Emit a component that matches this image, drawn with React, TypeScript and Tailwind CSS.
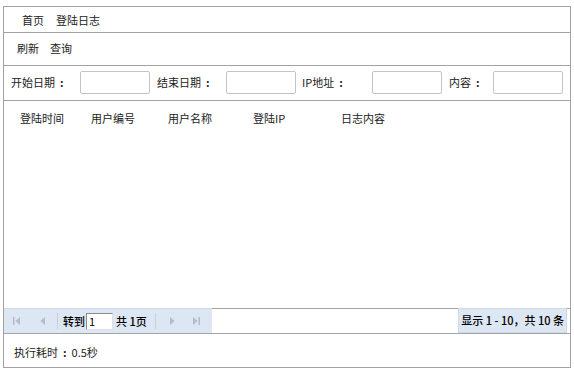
import React from 'react';

const cols = [
  { label: '登陆时间', w: 'w-[71px]' },
  { label: '用户编号', w: 'w-[77px]' },
  { label: '用户名称', w: 'w-[85px]' },
  { label: '登陆IP', w: 'w-[88px]' },
  { label: '日志内容', w: 'w-[80px]' },
];

// Disabled pager arrow icons
const PagerIcon = ({ kind }: { kind: 'first' | 'prev' | 'next' | 'last' }) => (
  <svg width="12" height="12" viewBox="0 0 12 12" className="text-[#b4bccb]">
    {kind === 'first' && (
      <>
        <rect x="2" y="2" width="1.5" height="8" fill="currentColor" />
        <path d="M9 2 L4.5 6 L9 10 Z" fill="currentColor" />
      </>
    )}
    {kind === 'prev' && <path d="M8 2 L3.5 6 L8 10 Z" fill="currentColor" />}
    {kind === 'next' && <path d="M4 2 L8.5 6 L4 10 Z" fill="currentColor" />}
    {kind === 'last' && (
      <>
        <path d="M3 2 L7.5 6 L3 10 Z" fill="currentColor" />
        <rect x="8.5" y="2" width="1.5" height="8" fill="currentColor" />
      </>
    )}
  </svg>
);

const Colon = () => <span className="inline-block px-[5px] font-bold">:</span>;

const FilterLabel = ({ text, className }: { text: string; className: string }) => (
  <span className={className}>
    {text}
    <Colon />
  </span>
);

const FilterInput = () => (
  <input
    type="text"
    className="w-[70px] h-[23px] border border-[#c4c4c4] rounded-[2px] bg-white outline-none px-1 text-[11px]"
  />
);

const App = () => {
  return (
    <div className="w-[574px] h-[371px] bg-white pt-[6px] pl-[3px] font-['Noto_Sans_CJK_SC',sans-serif] text-[11px] text-[#222]">
      <div className="w-[568px] h-[362px] border border-[#a3a3a3] flex flex-col">
        {/* Breadcrumb */}
        <div className="h-[26px] shrink-0 border-b border-[#a3a3a3] flex items-center pl-[18px] gap-[12px] pt-[1px]">
          <span>首页</span>
          <span>登陆日志</span>
        </div>

        {/* Toolbar */}
        <div className="h-[33px] shrink-0 border-b border-[#a3a3a3] flex items-center pl-[13px] gap-[11px] pb-[1px]">
          <span>刷新</span>
          <span>查询</span>
        </div>

        {/* Filters */}
        <div className="h-[35px] shrink-0 border-b border-[#a3a3a3] flex items-center pl-[7px] pb-[2px]">
          <FilterLabel text="开始日期" className="w-[69px]" />
          <FilterInput />
          <FilterLabel text="结束日期" className="w-[69px] ml-[7px]" />
          <FilterInput />
          <FilterLabel text="IP地址" className="w-[70px] ml-[6px]" />
          <FilterInput />
          <FilterLabel text="内容" className="w-[44px] ml-[7px]" />
          <FilterInput />
        </div>

        {/* Grid */}
        <div className="flex-1">
          <div className="flex pl-[16px] pt-[9px]">
            {cols.map((c) => (
              <span key={c.label} className={c.w}>
                {c.label}
              </span>
            ))}
          </div>
        </div>

        {/* Pager */}
        <div className="h-[26px] shrink-0 flex border-b border-[#a3a3a3]">
          <div className="w-[208px] bg-[#dde6f3] border-t border-[#cdd8e8] flex items-center pl-[7px]">
            <PagerIcon kind="first" />
            <span className="ml-[14px]">
              <PagerIcon kind="prev" />
            </span>
            <span className="ml-[8px] w-px h-[16px] bg-[#c5d0e0]" />
            <span className="ml-[5px] font-medium text-black">转到</span>
            <input
              type="text"
              defaultValue="1"
              className="ml-[1px] w-[27px] h-[17px] border border-[#8c8c8c] border-r-[#e0e0e0] border-b-[#e0e0e0] bg-white outline-none px-[2px] text-[11px] leading-none text-black"
            />
            <span className="ml-[3px] font-medium text-black">共 1页</span>
            <span className="ml-[8px] w-px h-[16px] bg-[#c5d0e0]" />
            <span className="ml-[10px]">
              <PagerIcon kind="next" />
            </span>
            <span className="ml-[12px]">
              <PagerIcon kind="last" />
            </span>
          </div>
          <div className="flex-1 border-t border-[#a3a3a3] flex justify-end pr-[3px]">
            <div className="h-[25px] -mt-px bg-[#dde6f3] border border-[#cdd8e8] flex items-center px-[2px] font-medium text-black">
              显示 1 - 10，共 10 条
            </div>
          </div>
        </div>

        {/* Footer */}
        <div className="h-[33px] shrink-0 flex items-center pl-[10px] pt-[3px]">
          执行耗时
          <Colon />
          0.5秒
        </div>
      </div>
    </div>
  );
};

export default App;
